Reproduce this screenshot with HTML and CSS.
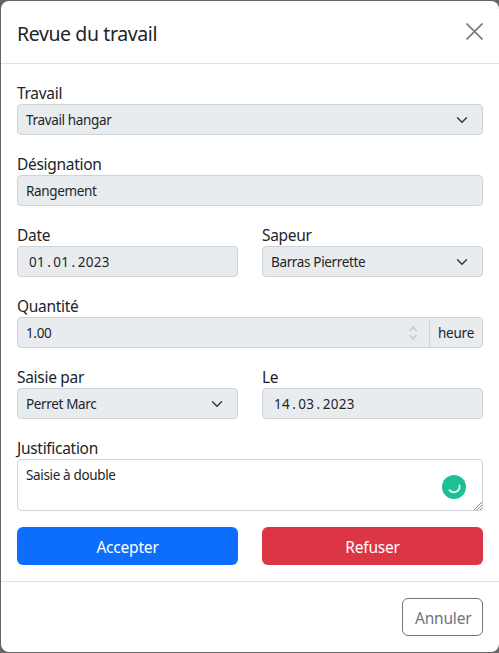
FILE: index.html
```html
<!DOCTYPE html>
<html lang="fr">
<head>
<meta charset="utf-8">
<title>Revue du travail</title>
<link rel="stylesheet" href="styles.css">
</head>
<body>
<div class="modal">
  <header class="modal-header">
    <h1 class="modal-title">Revue du travail</h1>
    <button class="close" aria-label="Fermer">
      <svg viewBox="0 0 16 16" width="17" height="17"><path d="M.5.5l15 15M15.5.5l-15 15" stroke="#7b7b7b" stroke-width="1.6" fill="none"/></svg>
    </button>
  </header>
  <main class="modal-body">
    <div class="group">
      <label class="label">Travail</label>
      <div class="control select"><span>Travail hangar</span><svg class="chev" viewBox="0 0 16 16"><path d="M2 5l6 6 6-6" fill="none" stroke="#343a40" stroke-width="2" stroke-linecap="round" stroke-linejoin="round"/></svg></div>
    </div>
    <div class="group">
      <label class="label">Désignation</label>
      <div class="control"><span>Rangement</span></div>
    </div>
    <div class="row group">
      <div>
        <label class="label">Date</label>
        <div class="control date"><span>01<span class="dot">.</span>01<span class="dot">.</span>2023</span></div>
      </div>
      <div>
        <label class="label">Sapeur</label>
        <div class="control select"><span>Barras Pierrette</span><svg class="chev" viewBox="0 0 16 16"><path d="M2 5l6 6 6-6" fill="none" stroke="#343a40" stroke-width="2" stroke-linecap="round" stroke-linejoin="round"/></svg></div>
      </div>
    </div>
    <div class="group">
      <label class="label">Quantité</label>
      <div class="input-group">
        <div class="control number"><span>1.00</span><svg class="spin" viewBox="0 0 10 16"><path d="M1.500 6L5 2l3.500 4M1.500 10L5 14l3.500-4" fill="none" stroke="#c2c6c9" stroke-width="1.300"/></svg></div>
        <div class="addon">heure</div>
      </div>
    </div>
    <div class="row group">
      <div>
        <label class="label">Saisie par</label>
        <div class="control select"><span>Perret Marc</span><svg class="chev" viewBox="0 0 16 16"><path d="M2 5l6 6 6-6" fill="none" stroke="#343a40" stroke-width="2" stroke-linecap="round" stroke-linejoin="round"/></svg></div>
      </div>
      <div>
        <label class="label">Le</label>
        <div class="control date"><span>14<span class="dot">.</span>03<span class="dot">.</span>2023</span></div>
      </div>
    </div>
    <div class="group">
      <label class="label">Justification</label>
      <div class="control textarea">Saisie à double
        <span class="badge"><svg viewBox="0 0 24 24" width="24" height="24"><path d="M17.500 10.500a5.800 5.800 0 0 1-10 4.800" fill="none" stroke="#d4f7ee" stroke-width="2" stroke-linecap="round"/></svg></span>
        <svg class="grip" viewBox="0 0 8 8" width="8" height="8"><path d="M0 8l8-8M3 8l5-5M6 8l2-2" stroke="#8a8a8a" stroke-width="1"/></svg>
      </div>
    </div>
    <div class="row actions">
      <button class="btn primary">Accepter</button>
      <button class="btn danger">Refuser</button>
    </div>
  </main>
  <footer class="modal-footer">
    <button class="btn outline">Annuler</button>
  </footer>
</div>
</body>
</html>
```
FILE: styles.css
```css
* { box-sizing: border-box; }
html, body { margin: 0; height: 100%; }
body {
  background: #666;
  padding: 1px 0 0 1px;
  overflow: hidden;
  font-family: "Noto Sans", "Open Sans", sans-serif;
  color: #212529;
  font-size: 15.500px;
  letter-spacing: -0.3px;
  line-height: 24px;
}
.modal {
  width: 498px;
  height: 651px;
  background: #fff;
  border-radius: 8px;
  display: flex;
  flex-direction: column;
}
.modal-header {
  height: 63px;
  border-bottom: 1px solid #dee2e6;
  padding: 3px 16px 0;
  display: flex;
  align-items: center;
  justify-content: space-between;
  flex: none;
}
.modal-title { margin: 0; font-size: 19.500px; font-weight: 400; line-height: 30px; letter-spacing: -0.4px; }
.close { border: 0; background: none; padding: 0; width: 18px; height: 18px; margin: -5px 0 0 0; display: flex; align-items: center; justify-content: center; }
.modal-body { padding: 16px 16px 16px; flex: none; }
.group { margin-bottom: 16px; }
.label { display: block; height: 24px; padding-top: 1px; }
.control {
  height: 31px;
  background: #e9ecef;
  border: 1px solid #ced4da;
  border-radius: 4px;
  font-size: 13.500px;
  letter-spacing: -0.35px;
  line-height: 21px;
  padding: 5px 8px 3px;
  position: relative;
  display: flex;
  align-items: center;
}
.select { justify-content: space-between; }
.chev { width: 12px; height: 12px; margin: -1px 6px 0 0; flex: none; }
.row { display: grid; grid-template-columns: 1fr 1fr; column-gap: 24px; }
.date { padding-left: 11px; letter-spacing: 0.3px; }
.dot { padding: 0 2.200px; }
.input-group { display: flex; }
.number { flex: 1; border-radius: 4px 0 0 4px; justify-content: space-between; padding-right: 11px; }
.spin { width: 10px; height: 16px; margin-top: -2px; }
.addon {
  height: 31px; margin-left: -1px; width: 54px;
  background: #e9ecef; border: 1px solid #ced4da; border-radius: 0 4px 4px 0;
  font-size: 13.500px; letter-spacing: -0.2px; line-height: 21px; padding: 5px 0 3px; text-align: center;
}
.textarea { height: 52px; background: #fff; display: block; padding: 5px 8px 3px; }
.badge {
  position: absolute; right: 16px; top: 15px;
  width: 24px; height: 24px; border-radius: 50%;
  background: #1fbf95; display: block;
}
.badge svg { display: block; }
.grip { position: absolute; right: 0; bottom: 0; }
.btn { font: inherit; letter-spacing: -0.2px; height: 38px; border-radius: 6px; border: 1px solid transparent; color: #fff; padding: 2px 12px 0; }
.primary { background: #0d6efd; }
.danger { background: #dc3545; }
.modal-footer {
  flex: 1;
  border-top: 1px solid #dee2e6;
  padding: 16px 15px 0;
  display: flex;
  justify-content: flex-end;
  align-items: flex-start;
}
.outline { background: #fff; border-color: #6c757d; color: #6c757d; width: 81px; margin-right: 1px; }
```
